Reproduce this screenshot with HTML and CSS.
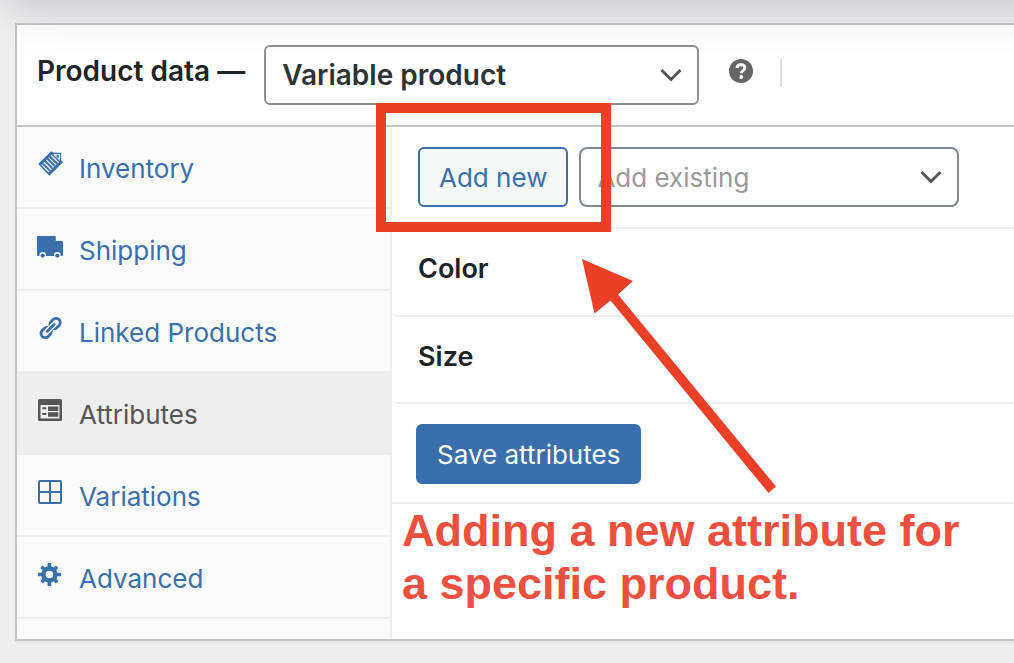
FILE: index.html
```html
<!doctype html>
<html lang="en">
<head>
  <meta charset="UTF-8">
  <title>Product data</title>
  <link rel="stylesheet" href="styles.css">
</head>
<body>
  <div class="top-shadow"></div>
  <section class="postbox">
    <div class="postbox-header">
      <h2><label for="product-type">Product data —</label></h2>
      <div class="select-wrap type-select">
        <select id="product-type">
          <option>Variable product</option>
          <option>Simple product</option>
        </select>
        <svg class="chevron" viewBox="0 0 22 14"><path d="M1.5 2 11 11.5 20.5 2"/></svg>
      </div>
      <button type="button" class="help" aria-label="Help">
        <svg viewBox="0 0 24 24"><circle cx="12" cy="12" r="12"/><path d="M8 9c.2-2.200 1.800-3.200 3.900-3.200 2.300 0 3.900 1.200 3.900 3 0 2.600-3.400 2.600-3.400 5.400" fill="none" stroke="#fff" stroke-width="3"/><circle cx="12.200" cy="18" r="1.900" fill="#fff"/></svg>
      </button>
      <span class="divider"></span>
    </div>
    <div class="panel-wrap">
      <nav class="tabs">
        <a href="#inventory">
          <svg viewBox="0 0 26 26"><path d="M1.200 13 13.600.8q1.200-1 2.400.6L24 2v7l2 2.300L12.300 24.800z"/><path d="m4.500 13.500 7.500 7.500M6.900 11.200l7.500 7.500M9.300 8.900l7.500 7.500M11.700 6.600l7.500 7.500M14.100 4.300l7.500 7.500" class="cut"/><path d="M16 3.200 23 3l-.2 7z" fill="#fafafa"/><path d="M16.500 2.500h7v7" class="line thin"/><circle cx="20.600" cy="5.400" r="1.300"/></svg>
          Inventory
        </a>
        <a href="#shipping">
          <svg viewBox="0 0 26 26"><path d="M1 3h17q.8 0 .8.8V8H25q1 0 1 1v13q0 1-1 1H1q-1 0-1-1V4q0-1 1-1z"/><circle cx="5.700" cy="22.400" r="3.300" fill="#fafafa"/><circle cx="20.300" cy="22.400" r="3.300" fill="#fafafa"/><circle cx="5.700" cy="22.600" r="2.100"/><circle cx="20.300" cy="22.600" r="2.100"/></svg>
          Shipping
        </a>
        <a href="#linked">
          <svg viewBox="0 0 20 20"><path d="M17.74 2.76c1.68 1.69 1.68 4.41 0 6.1l-1.53 1.52c-1.12 1.12-2.7 1.47-4.14 1.09l2.62-2.61.76-.77.76-.76c.84-.84.84-2.2 0-3.04-.84-.85-2.2-.85-3.04 0l-.77.76-3.38 3.38c-.37-1.44-.02-3.02 1.1-4.14l1.52-1.53c1.69-1.68 4.42-1.68 6.1 0zM8.59 13.43l5.34-5.34c.42-.42.42-1.1 0-1.52-.44-.43-1.13-.39-1.53 0l-5.33 5.34c-.42.42-.42 1.1 0 1.52.44.43 1.13.39 1.52 0zm-.76 2.29l4.14-4.15c.38 1.44.03 3.02-1.09 4.14l-1.52 1.53c-1.69 1.68-4.41 1.68-6.1 0-1.68-1.68-1.68-4.42 0-6.1l1.53-1.52c1.12-1.12 2.7-1.47 4.14-1.1l-4.14 4.15c-.85.84-.85 2.2 0 3.05.84.84 2.2.84 3.04 0z"/></svg>
          Linked Products
        </a>
        <a href="#attributes" class="active">
          <svg viewBox="0 0 26 26"><rect x="1" y="2" width="24" height="22" rx="1.5"/><path d="M3.500 8h19v13.500h-19z" fill="#eee"/><path d="M5.300 10.200h4v2h-4zM5.300 16h4v2h-4zM11 9.500h10.300v4.500H11zM11 15.300h10.300v4.500H11z"/></svg>
          Attributes
        </a>
        <a href="#variations">
          <svg viewBox="0 0 26 26"><rect x="2" y="2" width="22" height="22" rx="1" class="line"/><path d="M13 2v22M2 13h22" class="line"/></svg>
          Variations
        </a>
        <a href="#advanced">
          <svg viewBox="0 0 26 26"><circle cx="12.400" cy="13.500" r="6" fill="none" stroke="currentColor" stroke-width="4.400"/><path d="M12.400 2v4M12.400 21v4M1 13.500h4M20 13.500h4M4.600 5.700l2.500 2.500M17.700 18.800l2.500 2.500M4.600 21.300l2.500-2.500M17.700 8.200l2.500-2.500" fill="none" stroke="currentColor" stroke-width="3.600"/></svg>
          Advanced
        </a>
      </nav>
      <div class="panel">
        <div class="toolbar">
          <button type="button" class="button">Add new</button>
          <div class="select-wrap attr-select">
            <select aria-label="Add existing">
              <option>Add existing</option>
            </select>
            <svg class="chevron" viewBox="0 0 22 14"><path d="M1.5 2 11 11.5 20.5 2"/></svg>
          </div>
        </div>
        <h3>Color</h3>
        <h3>Size</h3>
        <div class="toolbar save">
          <button type="button" class="button primary">Save attributes</button>
        </div>
        <p class="caption">Adding a new attribute for<br>a specific product.</p>
        <!-- annotations over the panel -->
        <div class="highlight"></div>
        <svg class="arrow" viewBox="0 0 196 235"><path d="M0 0 51 22 36 35.500 194 227.500 186.500 234 28.500 41.500 12.500 54.500z"/></svg>
      </div>
    </div>
  </section>
</body>
</html>
```
FILE: styles.css
```css
* {box-sizing: border-box;}
body {
  margin: 0;
  padding: 23px 0 22px 15px;
  background: #efefef;
  color: #1d2327;
  font-family: Inter, "Liberation Sans", sans-serif;
  font-size: 26px;
  overflow-x: hidden;
}
.top-shadow {
  position: absolute;
  top: -40px;
  left: 12px;
  right: -60px;
  height: 40px;
  box-shadow: 0 0 44px 6px rgba(70, 75, 95, .27);
  pointer-events: none;
  z-index: 2;
}
.postbox {
  background: #fff;
  border: 2px solid #c3c4c7;
  border-right: 0;
  box-shadow: 0 2px 2px rgba(0, 0, 0, .04);
}
.postbox-header {
  display: flex;
  align-items: center;
  padding: 20px;
  border-bottom: 2px solid #c3c4c7;
}
h2 {
  margin: 0 19px 0 0;
  padding-bottom: 8px;
  font-size: 28px;
  font-weight: 600;
  white-space: nowrap;
}
.select-wrap {position: relative;}
.type-select {width: 435px;}
.attr-select {width: 380px;}
select {
  appearance: none;
  width: 100%;
  height: 60px;
  padding: 0 48px 0 16px;
  border: 2px solid #8c8f94;
  border-radius: 6px;
  background: #fff;
  color: #2c3338;
  font: inherit;
}
.type-select select {font-size: 28px;font-weight: 600;}
.attr-select select {border-color: #7e8993;border-radius: 8px;color: #999;}
.chevron {
  position: absolute;
  top: 23px;
  right: 17px;
  width: 22px;
  height: 14px;
  fill: none;
  stroke: #555;
  stroke-width: 3;
  pointer-events: none;
}
.help {
  width: 24px;
  height: 24px;
  margin: 0 27px 9px 30px;
  padding: 0;
  border: 0;
  background: none;
  fill: #666;
}
.help svg {display: block;}
.divider {width: 2px;height: 28px;margin-bottom: 4px;background: #ddd;}

.panel-wrap {display: flex;}
.tabs {
  flex: none;
  width: 375px;
  padding-bottom: 20px;
  border-right: 2px solid #eee;
  background: #fafafa;
}
.tabs a {
  display: flex;
  align-items: center;
  gap: 16px;
  height: 82px;
  padding: 2px 20px 0;
  border-bottom: 2px solid #eee;
  color: #3a6fad;
  text-decoration: none;
}
.tabs a.active {background: #eee;color: #555;}
.tabs svg {
  width: 26px;
  height: 26px;
  margin-bottom: 8px;
  fill: currentColor;
}
.tabs .line {fill: none;stroke: currentColor;stroke-width: 2;}
.tabs .thin {stroke-width: 1;}
.tabs .cut {stroke: #fafafa;stroke-width: 1.3;}

.panel {position: relative;flex: 1;}
.toolbar {
  display: flex;
  gap: 11px;
  padding: 20px 26px;
  border-bottom: 2px solid #eee;
}
.save {padding: 20px 24px 18px;}
.button {
  height: 60px;
  padding: 0 19px;
  border: 2px solid #3a6fad;
  border-radius: 6px;
  background: #f6f7f7;
  color: #3a6fad;
  font: inherit;
}
.primary {background: #3a6fad;color: #fff;}
h3 {
  height: 88px;
  margin: 0;
  padding: 0 26px;
  border-bottom: 2px solid #eee;
  border-bottom-left-radius: 6px;
  font-size: 27px;
  font-weight: 600;
  line-height: 80px;
}
h3 + h3 {height: 87px;}
.caption {
  margin: 0;
  padding: 0 10px;
  color: #ee4f3e;
  font: bold 45px/53px "Liberation Sans", Arial, sans-serif;
}
.highlight {
  position: absolute;
  top: -24px;
  left: -16px;
  width: 235px;
  height: 129px;
  border: 10px solid #eb4027;
  pointer-events: none;
}
.arrow {
  position: absolute;
  top: 132px;
  left: 190px;
  width: 196px;
  height: 235px;
  fill: #eb4027;
  pointer-events: none;
}
```
